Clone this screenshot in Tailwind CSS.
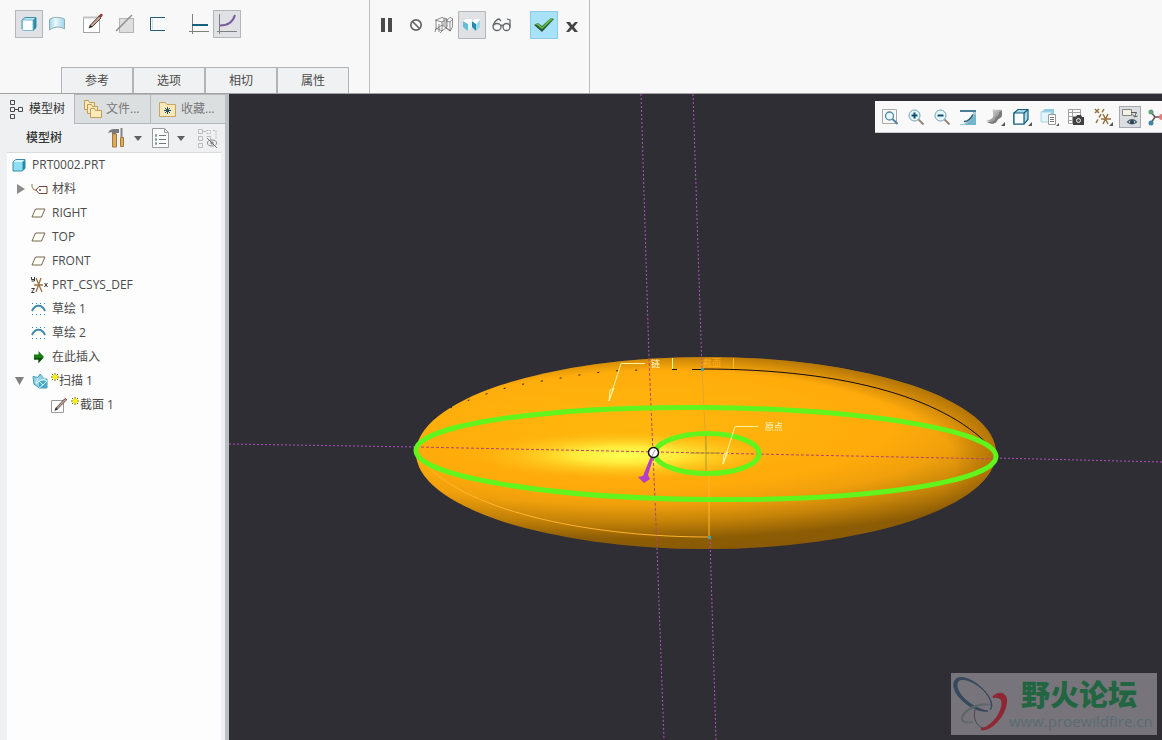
<!DOCTYPE html>
<html lang="zh-CN">
  <head>
    <meta charset="UTF-8" />
    <meta name="viewport" content="width=device-width, initial-scale=1.0" />
    <script src="https://cdn.jsdelivr.net/npm/@tailwindcss/browser@4"></script>
    <title>PRT0002.PRT</title>
  </head>

  <body
    class="flex h-screen flex-col overflow-hidden bg-[#2f2e35] font-['Open_Sans','Noto_Sans_CJK_SC',sans-serif] text-xs text-[#4a4a4a]"
  >
    <!-- Ribbon -->
    <header class="flex h-[94px] shrink-0 border-b border-[#a3a3a3] bg-[#f8f8f8]">
      <div class="flex w-[370px] flex-col justify-between border-r border-[#bdbdbd] pt-[10px]">
        <div class="flex pl-[15px]">
          <button aria-label="实体" class="flex size-7 items-center justify-center border border-[#b3b6b9] bg-[#dfe1e4]">
            <svg width="16" height="16" viewBox="0 0 16 16">
              <path d="M1 4l3-2.500h11v10l-3 2.500H2l-1-1z" fill="#b5e6f3" stroke="#3d91ab" />
              <path d="M12 4l3-2.500v10.500l-3 3z" fill="#2b8aa6" />
              <rect x="1.500" y="4" width="10.500" height="10.500" rx="1" fill="#fdfeff" stroke="#7dbccd" />
            </svg>
          </button>
          <button aria-label="曲面" class="flex size-7 items-center justify-center">
            <svg width="18" height="18" viewBox="0 0 18 18">
              <defs>
                <linearGradient id="surf"><stop offset="0" stop-color="#9fd6ec" /><stop offset=".4" stop-color="#eaf8fd" /><stop offset="1" stop-color="#9ed5ea" /></linearGradient>
              </defs>
              <path d="M1.500 4.500C5 1.500 12 2 16.500 4v10C12 11 6 11.500 1.500 15z" fill="url(#surf)" stroke="#8aabb8" />
            </svg>
          </button>
          <button aria-label="草绘" class="ml-2 flex size-7 items-center justify-center">
            <svg width="22" height="22" viewBox="0 0 22 22">
              <rect x="1.500" y="4.500" width="16" height="15" fill="#fff" stroke="#a5a5a5" />
              <path d="M1 4.500h17" stroke="#c3c3c3" stroke-width="2" />
              <path d="M8 12.500L17 3l2 2-9 9z" fill="#c6a38e" stroke="#5d4b44" />
              <path d="M16.500 3l2-2c1.500-.500 2.500.500 2 2l-2 2z" fill="#8f4038" />
              <path d="M6.500 15.500l1.500-3.500 2.500 2z" fill="#292929" />
            </svg>
          </button>
          <button aria-label="移除材料" class="ml-1 flex size-7 items-center justify-center">
            <svg width="20" height="20" viewBox="0 0 20 20">
              <rect x="4.500" y="4.500" width="14" height="14" fill="#dedede" stroke="#b4b4b4" />
              <path d="M1 17L17 1" stroke="#8d8d8d" stroke-width="1.500" />
            </svg>
          </button>
          <button aria-label="薄板" class="ml-[5px] flex size-7 items-center justify-center">
            <svg width="18" height="18" viewBox="0 0 18 18" fill="none">
              <path d="M16 2.500H1.500v13H16" stroke="#1f5f7a" />
              <path d="M3.500 4v10" stroke="#d5dde1" />
            </svg>
          </button>
          <button aria-label="恒定截面" class="ml-[13px] flex size-7 items-center justify-center">
            <svg width="22" height="20" viewBox="0 0 22 20">
              <path d="M4.500 0v20M1 17.500h20" stroke="#808080" />
              <path d="M4 11h16" stroke="#176079" stroke-width="2" />
            </svg>
          </button>
          <button aria-label="可变截面" class="flex size-7 items-center justify-center border border-[#b3b6b9] bg-[#dfe1e4]">
            <svg width="22" height="22" viewBox="0 0 22 22" fill="none">
              <path d="M3.500 1v20M1 18.500h20" stroke="#808080" />
              <path d="M4 12.500C12 12.500 17 9 19 2" stroke="#7a5b9b" stroke-width="2" />
            </svg>
          </button>
        </div>
        <nav class="flex pl-[61px]">
          <button class="h-[26px] w-[72px] border-x border-t border-[#b1b3b5] bg-[#eff1f2]">参考</button>
          <button class="h-[26px] w-[72px] border-x border-t border-[#b1b3b5] bg-[#eff1f2]">选项</button>
          <button class="h-[26px] w-[72px] border-x border-t border-[#b1b3b5] bg-[#eff1f2]">相切</button>
          <button class="h-[26px] w-[72px] border-x border-t border-[#b1b3b5] bg-[#eff1f2]">属性</button>
        </nav>
      </div>

      <div class="flex w-[220px] border-r border-[#bdbdbd] pt-[11px] pl-[2px]">
        <button aria-label="暂停" class="flex size-7 items-center justify-center">
          <svg width="12" height="14" viewBox="0 0 12 14"><path d="M1 0h4v14H1zM8 0h4v14H8z" fill="#4b4b4b" /></svg>
        </button>
        <button aria-label="无预览" class="ml-[2px] flex size-7 items-center justify-center">
          <svg width="14" height="14" viewBox="0 0 14 14" fill="none" stroke="#666" stroke-width="1.700"><circle cx="7" cy="7" r="5.200" /><path d="M3.500 3.500l7 7" /></svg>
        </button>
        <button aria-label="分离预览" class="flex size-7 items-center justify-center">
          <svg width="20" height="18" viewBox="0 0 20 18" fill="none" stroke="#707070" stroke-width=".8">
            <path d="M1 4l7 2v9l-6-3V4l6-2.500 5 1.500-5 3M8 15l5-4V3M12 5l4 1v9l-4-3zM12 5l4-3.500 3 1.500-3 3M16 15l2.500-4V3M1 14l7-5 9 6M2 12l-1 4M8 15l-2 2M5 8v8M10 2v8" />
          </svg>
        </button>
        <button aria-label="连接预览" class="flex size-7 items-center justify-center border border-[#b3b6b9] bg-[#dfe1e4]">
          <svg width="18" height="14" viewBox="0 0 18 14">
            <path d="M0 3l5 3v7l-5-4z" fill="#65bdd8" /><path d="M5 6l4-4v7l-4 4z" fill="#e5f7fc" /><path d="M0 3l3-2h5l1 1-4 4z" fill="#fff" />
            <path d="M9 3l4 3v7l-4-4z" fill="#238ba9" /><path d="M13 6l4-4v7l-4 4z" fill="#9cd9ea" /><path d="M9 3l3-2h4l1 1-4 4z" fill="#fff" />
          </svg>
        </button>
        <button aria-label="特征预览" class="ml-[2px] flex size-7 items-center justify-center">
          <svg width="20" height="14" viewBox="0 0 20 14" fill="none" stroke="#60666a" stroke-width="1.300">
            <ellipse cx="5" cy="9" rx="4" ry="3.500" /><ellipse cx="14.500" cy="9" rx="3.500" ry="3.500" /><path d="M1 8c1-4 4-7 6-7l2 2M9 8c.500-1 2-1 2.500 0M18 9V2l-3-1" />
          </svg>
        </button>
        <button aria-label="确定" class="ml-[14px] flex size-7 items-center justify-center border border-[#8ccbe6] bg-[#a8e2fa]">
          <svg width="20" height="16" viewBox="0 0 20 16"><path d="M0 8l4-2 4 3L17 1l3 1L8 15z" fill="#2a5b3c" /><path d="M1 7l3-1 4 4L17 1l2 1L8 12 3 8z" fill="#63c04a" /></svg>
        </button>
        <button aria-label="取消" class="flex size-7 items-center justify-center">
          <svg class="mt-1" width="14" height="10" viewBox="0 0 14 10"><path d="M1 0h4l2 3 3-3h3L9 5l4 5H9.500L7 7l-3 3H1l4-5z" fill="#444" /></svg>
        </button>
      </div>
    </header>

    <div class="flex min-h-0 flex-1">
      <!-- Model tree -->
      <aside class="flex w-[229px] shrink-0 flex-col border-r-4 border-[#b9c0c3] bg-[#eef0f2]">
        <div class="flex h-[30px]" role="tablist">
          <button role="tab" class="flex w-[74px] items-center gap-[6px] pl-[9px] text-[#333]">
            <svg width="14" height="20" viewBox="0 0 14 20" fill="none" stroke="#4a4a4a">
              <path d="M1.500 1.500h4v4h-4zM1.500 8.500h4v4h-4zM9.500 8.500h4v4h-4zM1.500 15.500h4v4h-4zM5.500 10.500h4" />
            </svg>
            模型树
          </button>
          <button role="tab" class="flex w-[77px] items-center gap-[3px] border border-[#b4b8ba] bg-[#dcdfe0] pl-2 text-[#777]">
            <svg width="20" height="20" viewBox="0 0 20 20" fill="#fde9b9" stroke="#c59c57">
              <path d="M1.500 10.500v-9h4l1 2h5v7z" /><path d="M4.500 14.500v-9h4l1 2h5v7z" /><path d="M7.500 18.500v-9h4l1 2h6v7z" />
            </svg>
            文件...
          </button>
          <button role="tab" class="flex flex-1 items-center gap-[5px] border-y border-[#b4b8ba] bg-[#dcdfe0] pl-2 text-[#777]">
            <svg width="17" height="16" viewBox="0 0 17 16">
              <path d="M.500 15.500v-14h6l1.500 2h8.500v12z" fill="#fbe8b8" stroke="#c6a466" />
              <path d="M8.500 6v7M5 9.500h7M6 7l5 5M11 7l-5 5" stroke="#1c5266" />
            </svg>
            收藏...
          </button>
        </div>

        <div class="flex h-7 items-center pl-[26px]">
          <h2 class="w-[82px] font-medium text-[#333]">模型树</h2>
          <button aria-label="设置" class="flex items-center gap-2">
            <svg width="18" height="20" viewBox="0 0 18 20">
              <path d="M0 5l2-3 3-1h6v4H8v1H4V4z" fill="#7a7a7a" />
              <path d="M4.500 6h4v13h-4z" fill="#ddab5e" stroke="#a37a3a" />
              <path d="M13.500 0v9" stroke="#858585" stroke-width="2" /><path d="M12.500 9.500h3v9h-3z" fill="#e1ad55" stroke="#a37a3a" />
            </svg>
            <svg width="8" height="5" viewBox="0 0 8 5"><path d="M0 0h8L4 5z" fill="#606060" /></svg>
          </button>
          <button aria-label="显示" class="ml-[10px] flex items-center gap-2">
            <svg width="17" height="20" viewBox="0 0 17 20" fill="none">
              <path d="M.500 .500h12l4 4v15H.500z" fill="#fafafa" stroke="#9b9b9b" /><path d="M12.500 .500v4h4" stroke="#9b9b9b" />
              <path d="M7 7.500h7M7 11.500h7M7 15.500h7" stroke="#777" /><path d="M3.500 6.500h1v2h-1zM3.500 10.500h1v2h-1zM3.500 14.500h1v2h-1z" stroke="#7d99a4" />
            </svg>
            <svg width="8" height="5" viewBox="0 0 8 5"><path d="M0 0h8L4 5z" fill="#606060" /></svg>
          </button>
          <button aria-label="隐藏项" class="ml-3">
            <svg width="21" height="20" viewBox="0 0 21 20" fill="none" stroke="#babdbf">
              <path d="M1.500 1.500h4v4h-4zM1.500 8.500h4v4h-4zM9.500 8.500h4v4M1.500 15.500h4v4h-4zM5.500 3.500h4" /><path d="M9.500 2.500h4v3h-4M16 2.500h3v8" stroke-dasharray="2 1" />
              <ellipse cx="15" cy="15" rx="4.500" ry="3" stroke="#8c8c8c" /><circle cx="15" cy="15" r="1.500" fill="#777" /><path d="M10 10l10 10" stroke="#777" />
            </svg>
          </button>
        </div>

        <ul class="mr-1 ml-[7px] flex-1 border-t border-[#d9dcde] bg-[#fdfdfe]">
          <li class="flex h-6 items-center gap-[6px] pl-[5px]">
            <svg width="14" height="14" viewBox="0 0 14 14">
              <path d="M1 4l3-2.500h9v9l-3 2.500H1z" fill="#8edff4" stroke="#3a8ba4" /><path d="M1.500 4L4 2h8l-2 2z" fill="#d7f6fd" /><path d="M10.500 4L13 2v8.500l-2.500 2z" fill="#248ba9" />
            </svg>
            PRT0002.PRT
          </li>
          <li class="flex h-6 items-center pl-[10px]">
            <svg class="mr-[6px]" width="8" height="10" viewBox="0 0 8 10"><path d="M0 0l8 5-8 5z" fill="#8c8c8c" /></svg>
            <svg class="mr-1" width="17" height="12" viewBox="0 0 17 12" fill="none">
              <path d="M1 1v3l2 3h2" stroke="#a2743d" /><path d="M5 7l3-3.500h8v7H8z" fill="#fff" stroke="#6c4a35" /><circle cx="9" cy="7" r="1" fill="#6c4a35" />
            </svg>
            材料
          </li>
          <li class="flex h-6 items-center gap-[6px] pl-6">
            <svg width="15" height="10" viewBox="0 0 15 10"><path d="M4.500 1h9.500l-3.500 8H1z" fill="#fffdf8" stroke="#77664d" /></svg>
            RIGHT
          </li>
          <li class="flex h-6 items-center gap-[6px] pl-6">
            <svg width="15" height="10" viewBox="0 0 15 10"><path d="M4.500 1h9.500l-3.500 8H1z" fill="#fffdf8" stroke="#77664d" /></svg>
            TOP
          </li>
          <li class="flex h-6 items-center gap-[6px] pl-6">
            <svg width="15" height="10" viewBox="0 0 15 10"><path d="M4.500 1h9.500l-3.500 8H1z" fill="#fffdf8" stroke="#77664d" /></svg>
            FRONT
          </li>
          <li class="flex h-6 items-center gap-1 pl-6">
            <svg width="17" height="16" viewBox="0 0 17 16" fill="none">
              <path d="M3 8h9M5 1l6 14M10 1L5 15" stroke="#9a7340" stroke-width="1.300" />
              <path d="M.500 0v2.500h3M3.500 0v4h-3M.500 11.500h3l-3 4h3M13.500 6l3 4M16.500 6l-3 4" stroke="#383838" />
            </svg>
            PRT_CSYS_DEF
          </li>
          <li class="flex h-6 items-center gap-[6px] pl-6">
            <svg width="15" height="14" viewBox="0 0 15 14" fill="none">
              <path d="M1 1.500h14M1 12.500h14" stroke="#3a8aa5" stroke-dasharray="1 3" /><path d="M1 9c3-7 10-7 13 0" stroke="#3d8ba6" stroke-width="2" />
            </svg>
            草绘 1
          </li>
          <li class="flex h-6 items-center gap-[6px] pl-6">
            <svg width="15" height="14" viewBox="0 0 15 14" fill="none">
              <path d="M1 1.500h14M1 12.500h14" stroke="#3a8aa5" stroke-dasharray="1 3" /><path d="M1 9c3-7 10-7 13 0" stroke="#3d8ba6" stroke-width="2" />
            </svg>
            草绘 2
          </li>
          <li class="flex h-6 items-center gap-2 pl-[27px]">
            <svg width="10" height="12" viewBox="0 0 10 12"><path d="M0 3.500h4.500V0L10 6l-5.500 6V8.500H0z" fill="#187b12" /><path d="M0 7h9l-4.500 5V8.500H0z" fill="#0b5009" /></svg>
            在此插入
          </li>
          <li class="flex h-6 items-center pl-2">
            <svg class="mr-[8px]" width="9" height="8" viewBox="0 0 9 8"><path d="M0 0h9L4.500 8z" fill="#808080" /></svg>
            <svg class="mr-[3px]" width="16" height="16" viewBox="0 0 16 16">
              <path d="M1 3.500l5 1L8 1l4 5h3v9H7l-5-4z" fill="#8fd3e8" stroke="#4d98b0" />
              <path d="M7 8h8v7H7z" fill="#4ba9c6" /><path d="M6 4.500L4 11l3-3 5-2 3 2-4 4-4-4M11 12l-4 3" fill="none" stroke="#d6f5fb" />
            </svg>
            <svg width="8" height="8" viewBox="0 0 8 8" class="mb-2"><path d="M4 0v8M0 4h8M1 1l6 6M7 1L1 7" stroke="#6d6720" /><circle cx="4" cy="4" r="2.500" fill="#f8f400" /></svg>
            扫描 1
          </li>
          <li class="flex h-6 items-center pl-11">
            <svg class="mr-[3px]" width="17" height="16" viewBox="0 0 17 16">
              <path d="M.500 3.500h12v12H.500z" fill="#fff" stroke="#999" /><path d="M5 11l8.500-9 1.500 1.500L6.500 12z" fill="#c9a795" stroke="#5d5451" /><path d="M3.500 14l1-3.500 2.500 2z" fill="#333" /><path d="M13.500 1l2.500 2" stroke="#a44a43" />
            </svg>
            <svg width="8" height="8" viewBox="0 0 8 8" class="mr-px mb-2"><path d="M4 0v8M0 4h8M1 1l6 6M7 1L1 7" stroke="#6d6720" /><circle cx="4" cy="4" r="2.500" fill="#f8f400" /></svg>
            截面 1
          </li>
        </ul>
      </aside>

      <!-- Graphics window -->
      <main class="relative min-w-0 flex-1 overflow-hidden">
        <svg class="block size-full" viewBox="229 94 933 646" preserveAspectRatio="xMidYMid slice" fill="none">
          <defs>
            <radialGradient id="body" gradientUnits="userSpaceOnUse" cx="0" cy="0" r="1" gradientTransform="translate(630 425) scale(520 124)">
              <stop offset="0" stop-color="#ffb70c" /><stop offset=".5" stop-color="#ffab0b" /><stop offset=".64" stop-color="#f0a00b" />
              <stop offset=".78" stop-color="#c58308" /><stop offset=".92" stop-color="#8d5d05" /><stop offset="1" stop-color="#8a5a05" />
            </radialGradient>
            <radialGradient id="rim" gradientUnits="userSpaceOnUse" cx="0" cy="0" r="1" gradientTransform="translate(665 465) scale(346 112)">
              <stop offset=".84" stop-color="#7a4c00" stop-opacity="0" /><stop offset="1" stop-color="#7a4c00" stop-opacity=".5" />
            </radialGradient>
            <radialGradient id="glow">
              <stop offset="0" stop-color="#ffff55" /><stop offset=".35" stop-color="#fff13f" stop-opacity=".9" /><stop offset="1" stop-color="#ffc41a" stop-opacity="0" />
            </radialGradient>
          </defs>
          <ellipse cx="706" cy="453" rx="290" ry="96" fill="url(#body)" />
          <ellipse cx="706" cy="453" rx="290" ry="96" fill="url(#rim)" />
          <ellipse cx="626" cy="455" rx="150" ry="24" fill="url(#glow)" />

          <!-- datum planes -->
          <g stroke="#b34fc0" stroke-dasharray="2 2">
            <path d="M229 444L416 447M996 458L1162 462" />
            <path d="M641 94L649 358M657 548L664 740M693 94L702 370M710 538L716 740" />
          </g>
          <path d="M416 447L996 459M649 358L657 548" stroke="#b8436c" stroke-dasharray="3 2" />
          <path d="M702 370L706 450" stroke="#e3a528" />

          <!-- trajectories -->
          <path d="M702 369C850 369 950 400 994 451" stroke="#160b16" />
          <path d="M672 369.500h5M692 369.500h9" stroke="#241400" />
          <path d="M434 418L450 408 474 398 498 390 518 385 548 380 586 374 610 371 640 370" stroke="#2b1b00" stroke-dasharray="2 17" />
          <path d="M422 461C470 515 600 537 709 537V472" stroke="#ffb52c" />
          <path d="M706 434v40M690 453h30" stroke="#b09a2a" />
          <g stroke="#61f51d" stroke-width="5">
            <ellipse cx="706" cy="453.500" rx="290" ry="46" transform="rotate(.6 706 453.500)" />
            <ellipse cx="707" cy="453.500" rx="52" ry="20" />
          </g>
          <path d="M701 368h3v3h-3zM708 536h3v3h-3z" fill="#45a29c" />

          <!-- seam -->
          <path d="M651 456h3l-6 19 2 4-6 4-6-6 5-1z" fill="#b43fc5" />
          <circle cx="653.500" cy="452.500" r="5" fill="#fff" stroke="#111" stroke-width="1.500" />
          <path d="M655 450l-3 6" stroke="#b58ac5" />

          <!-- callouts -->
          <g stroke="#fff3a0">
            <path d="M645 363.500H621L609 401M609 401l1-11 4-2z" /><path d="M758 426.500H735L723 464M723 464l1-10 4-2z" />
          </g>
          <g class="font-['Noto_Sans_CJK_SC',sans-serif] text-[9px]">
            <text x="651" y="367" fill="#fff6c8">链</text>
            <text x="765" y="430" fill="#fff6c8">原点</text>
            <text x="703" y="366" fill="#ffab20">截面</text>
          </g>
          <path d="M672.500 358v11" stroke="#fff3a0" /><path d="M733.500 358v11" stroke="#ffb52c" />
        </svg>

        <!-- View toolbar -->
        <div class="absolute top-[7px] right-0 flex h-8 w-[287px] items-center gap-[5px] overflow-hidden border-b border-[#c9c9c9] bg-[#f9f9fa] pl-1" role="toolbar">
          <div class="flex shrink-0 gap-1">
            <button aria-label="重新调整" class="flex h-[22px] w-[22px] items-center justify-center">
              <svg width="16" height="16" viewBox="0 0 16 16" fill="none"><path d="M.500 .500h14v14H.500z" stroke="#a8a8a8" /><circle cx="7.500" cy="7" r="4" fill="#eaf8fd" stroke="#5088a0" stroke-width="1.300" /><path d="M10.500 10l5 5" stroke="#5088a0" stroke-width="2" /></svg>
            </button>
            <button aria-label="放大" class="flex h-[22px] w-[22px] items-center justify-center">
              <svg width="16" height="16" viewBox="0 0 16 16" fill="none"><circle cx="6.500" cy="6.500" r="5.500" fill="#e5f6fb" stroke="#6f9fb2" /><path d="M10.500 10.500l5 5" stroke="#98887e" stroke-width="2" /><path d="M3.500 6.500h6M6.500 3.500v6" stroke="#13506e" stroke-width="2" /></svg>
            </button>
            <button aria-label="缩小" class="flex h-[22px] w-[22px] items-center justify-center">
              <svg width="16" height="16" viewBox="0 0 16 16" fill="none"><circle cx="6.500" cy="6.500" r="5.500" fill="#e5f6fb" stroke="#6f9fb2" /><path d="M10.500 10.500l5 5" stroke="#98887e" stroke-width="2" /><path d="M3.500 6.500h6" stroke="#13506e" stroke-width="2" /></svg>
            </button>
            <button aria-label="重画" class="flex h-[22px] w-[22px] items-center justify-center">
              <svg width="16" height="16" viewBox="0 0 16 16"><path d="M0 1h16v15H0z" fill="#a9cbd8" /><path d="M0 3h13v2L4 15H0z" fill="#f6fafb" /><path d="M0 1h16v2H0z" fill="#4c7f96" /><path d="M16 5v11H5z" fill="#72b5cc" /><path d="M4 12.500c4 0 7-3 9-7" fill="none" stroke="#2c5a6e" stroke-width="1.500" /></svg>
            </button>
          </div>
          <div class="flex shrink-0 gap-[5px]">
            <button aria-label="渲染选项" class="flex h-[22px] w-[22px] items-center justify-center">
              <svg width="20" height="18" viewBox="0 0 20 18">
                <defs><linearGradient id="metal" x1="0" y1="0" x2="1" y2="1"><stop offset="0" stop-color="#efefef" /><stop offset="1" stop-color="#686868" /></linearGradient></defs>
                <path d="M8 1c3 2 6 0 9 1v6c-2 3-4 2-5 5-2 3-5 3-7 1l-4-1c2-1 5-1 7-4 1-3-1-5 0-8z" fill="url(#metal)" /><path d="M14 4c1 4-4 4-4 8-2 2-5 2-8 2 5 3 8 2 10-1 1-3 4-2 5-6V3z" fill="#7b7b7b" /><path d="M20 14v4h-4z" fill="#555" />
              </svg>
            </button>
            <button aria-label="显示样式" class="flex h-[22px] w-[22px] items-center justify-center">
              <svg width="20" height="18" viewBox="0 0 20 18"><path d="M2 5l4-3.500h10v10L12 16H2z" fill="#a7d8e8" stroke="#155f7a" stroke-width="1.200" /><path d="M2 5h10v11H2z" fill="#f8fdff" stroke="#155f7a" stroke-width="1.200" /><path d="M12 5l4-3.500" stroke="#155f7a" stroke-width="1.200" /><path d="M20 14v4h-4z" fill="#555" /></svg>
            </button>
            <button aria-label="已保存方向" class="flex h-[22px] w-[22px] items-center justify-center">
              <svg width="20" height="18" viewBox="0 0 20 18"><path d="M2 4l4-3h9v9l-3 4H2z" fill="#8dcce0" /><path d="M2 4h10v10H2z" fill="#e3f4fa" stroke="#aed5e1" /><path d="M9.500 6.500h7v10h-7z" fill="#fff" stroke="#999" /><path d="M11 9.500h4M11 11.500h4M11 13.500h4" stroke="#777" /><path d="M20 15v3h-3z" fill="#555" /></svg>
            </button>
            <button aria-label="视图管理器" class="flex h-[22px] w-[22px] items-center justify-center">
              <svg width="18" height="18" viewBox="0 0 18 18"><path d="M1.500 1.500h12v14h-12zM1.500 4.500h12M1.500 8.500h12M1.500 12.500h12M5.500 1.500v14" fill="#fff" stroke="#a0a0a0" /><path d="M6 9h3l1-2h4l1 2h2v8H6z" fill="#404040" /><circle cx="11.500" cy="12.500" r="2" fill="#555" stroke="#eee" /></svg>
            </button>
            <button aria-label="基准显示过滤器" class="flex h-[22px] w-[22px] items-center justify-center">
              <svg width="20" height="18" viewBox="0 0 20 18" stroke="#96733e" stroke-width="1.500"><path d="M2 1l4 4M6 1L2 5" /><path d="M11 1L3 15" stroke-dasharray="4 2" /><path d="M8 11h10M10 6l5 10M15 6l-5 10" /><path d="M20 14v4h-4z" fill="#555" stroke="none" /></svg>
            </button>
            <button aria-label="注释显示" class="flex h-[22px] w-[22px] items-center justify-center border border-[#a6a9ad] bg-[#dadde1]">
              <svg class="shrink-0" width="18" height="18" viewBox="0 0 18 18" fill="none"><path d="M1.500 1.500h9v6h-9z" fill="#f3f1ec" stroke="#8a8378" /><path d="M10 4.500h5.500l-2 4M11.500 6.500l2 2.500 3-1" stroke="#555" /><path d="M6.500 14c3-3 6-3 9 0-3 2.500-6 2.500-9 0z" fill="#fff" stroke="#4c5b66" stroke-width="1.200" /><circle cx="11" cy="14" r="2" fill="#1d4156" /></svg>
            </button>
            <button aria-label="旋转中心" class="flex h-[22px] w-[22px] shrink-0 items-center justify-center">
              <svg width="18" height="18" viewBox="0 0 18 18"><path d="M3 4l4 5-4 6M7 9h8" fill="none" stroke="#62504e" stroke-width="1.500" /><circle cx="3" cy="4" r="2.500" fill="#62a078" /><circle cx="3" cy="15" r="2.500" fill="#3d86a9" /><circle cx="14" cy="9" r="3" fill="#ee7773" /></svg>
            </button>
          </div>
        </div>

        <!-- Forum watermark -->
        <div class="absolute right-[5px] bottom-[5px] flex h-[62px] w-[206px] items-center bg-[#77757b]">
          <svg class="shrink-0" width="58" height="62" viewBox="0 0 58 62" fill="none">
            <path d="M37 38C24 40 5 26 3 14 1 2 14 2 26 11c12 9 18 21 13 26 5-7-4-19-13-25C16 5 5 4 6 13c1 10 17 23 31 25z" fill="#36495d" stroke="#36495d" />
            <path d="M42 24c8-6 14-3 13 6-2 14-16 28-25 26 10-1 19-13 21-22 2-8-2-11-9-10z" fill="#8f2735" stroke="#8f2735" stroke-width="2" />
            <path d="M40 32c-9-2-25 4-28 12-2 4 2 6 10 5-9 2-13 0-11-6 3-8 19-15 29-11z" fill="#5d6669" stroke="#5d6669" />
            <path d="M24 37c-2 8 1 16 8 18" stroke="#4d4650" />
          </svg>
          <div class="flex flex-col">
            <span class="pl-3 font-['Noto_Sans_CJK_SC',sans-serif] text-[29px] leading-[34px] font-black text-[#226541]">野火论坛</span>
            <span class="font-['Open_Sans',sans-serif] text-[15px] leading-[22px] text-[#5a6b72]">www.proewildfire.cn</span>
          </div>
        </div>
      </main>
    </div>
  </body>
</html>
